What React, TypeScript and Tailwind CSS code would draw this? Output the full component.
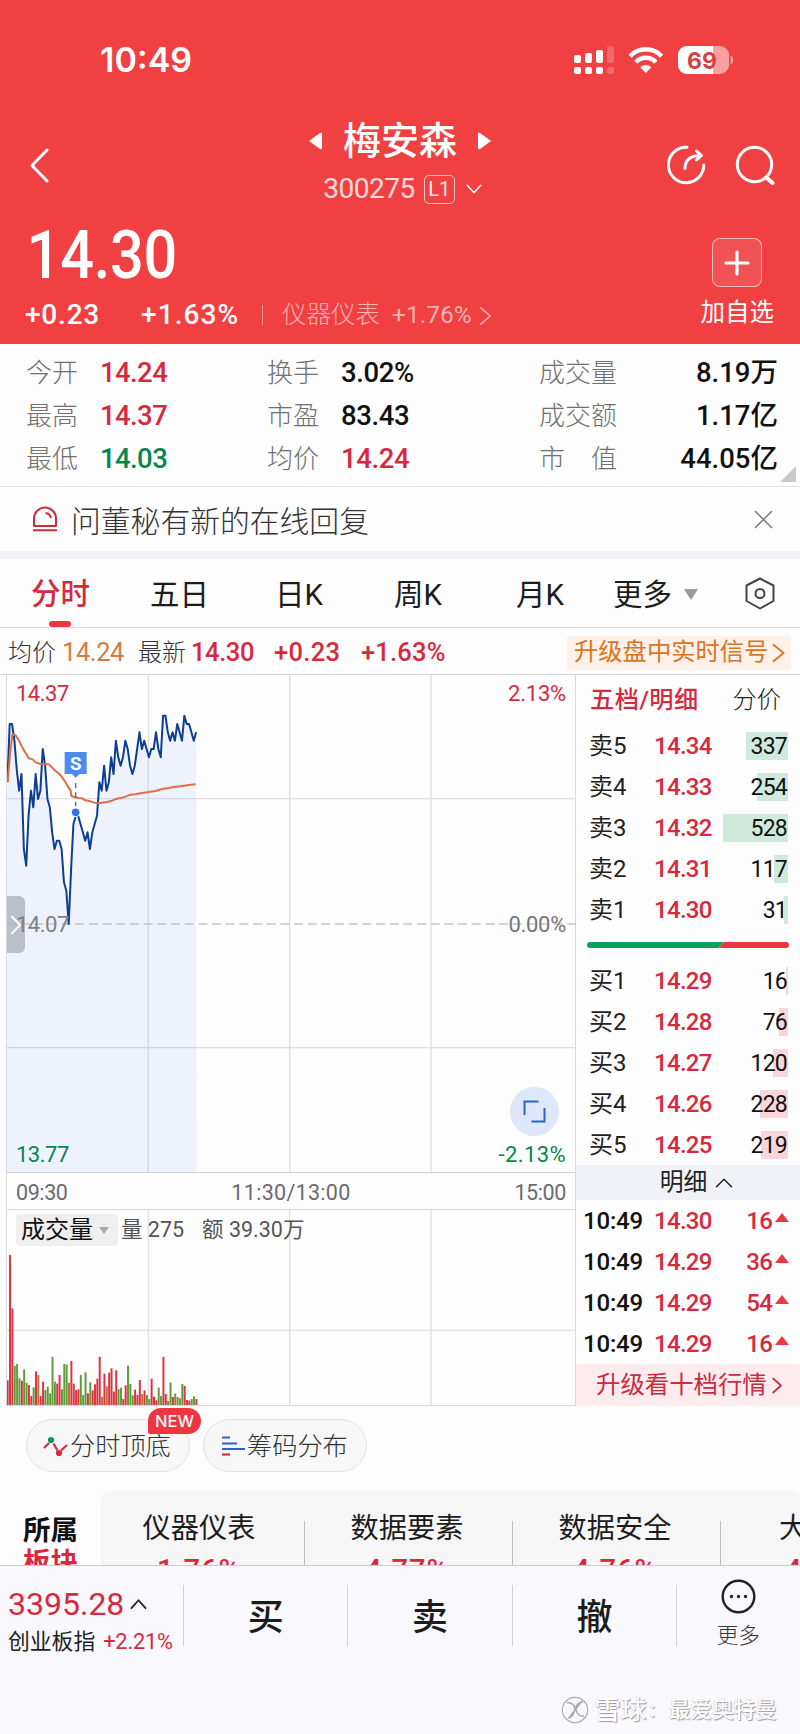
import { Fragment, type ReactNode } from 'react'
import clsx from 'clsx'

const STATS = [
  ['今开', '14.24', 'text-[#d6293e]', '换手', '3.02%', 'text-[#111]', '成交量', '8.19万'],
  ['最高', '14.37', 'text-[#d6293e]', '市盈', '83.43', 'text-[#111]', '成交额', '1.17亿'],
  ['最低', '14.03', 'text-[#07864c]', '均价', '14.24', 'text-[#d6293e]', '市　值', '44.05亿'],
]

const SELLS = [
  { label: '卖5', price: '14.34', qty: 337, bar: 42 },
  { label: '卖4', price: '14.33', qty: 254, bar: 31 },
  { label: '卖3', price: '14.32', qty: 528, bar: 65 },
  { label: '卖2', price: '14.31', qty: 117, bar: 14 },
  { label: '卖1', price: '14.30', qty: 31, bar: 4 },
]

const BUYS = [
  { label: '买1', price: '14.29', qty: 16, bar: 2 },
  { label: '买2', price: '14.28', qty: 76, bar: 9 },
  { label: '买3', price: '14.27', qty: 120, bar: 15 },
  { label: '买4', price: '14.26', qty: 228, bar: 28 },
  { label: '买5', price: '14.25', qty: 219, bar: 27 },
]

const TRADES = [
  ['10:49', '14.30', 16],
  ['10:49', '14.29', 36],
  ['10:49', '14.29', 54],
  ['10:49', '14.29', 16],
]

// price per minute, in cents above the previous close (14.07)
const TICKS = [
  17, 24, 24, 22, 18.5, 16, 18, 9, 7, 13, 16, 14, 18, 15, 16, 21, 19, 15, 14, 11, 9, 10, 10, 9, 5, 4, 0,
  6.5, 12, 13, 13, 12, 11, 10, 11, 9, 11, 12, 13, 17, 16, 19, 16, 17, 20, 18, 22, 20, 19, 20, 22, 21, 19,
  18, 19, 21, 23, 21, 22, 21, 20, 21, 21, 23, 21, 20, 25, 25, 23, 22, 23, 22, 24, 23, 22, 25, 24, 24, 23,
  22, 23,
]

// volume per minute: height + r / g / b (up, down, flat)
const VOLUMES =
  '74r 450r 290r 117g 123g 80g 73r 107g 67g 60r 27r 53g 101r 90b 27r 70r 45g 55g 35g 144g 70g 64r 90r 47g 123g 121g 66b 132r 64r 45r 47r 90g 30g 98g 35r 68g 44r 62r 79r 145r 25b 94r 56b 97r 110r 40r 104r 47g 52g 18r 59r 118g 63g 29g 46r 30r 75r 33b 44r 30g 18g 79r 25r 14r 52g 27g 144r 33r 12g 68g 24r 34g 24b 20g 63g 57r 15r 13r 18g 26g 18r'.split(
    ' ',
  )

const BAR_FILL: Record<string, string> = { r: '#dd3442', g: '#5d9e3b', b: '#b8703c' }

const px = (i: number) => 1 + i * 7.08
const py = (t: number) => 750 - t * 25

function Chevron({ className, d, w = 2 }: { className: string; d: string; w?: number }) {
  return (
    <svg viewBox="0 0 24 24" className={clsx('shrink-0', className)} fill="none" stroke="currentColor" strokeWidth={w} strokeLinecap="round" strokeLinejoin="round">
      <path d={d} />
    </svg>
  )
}

function StatusBar() {
  return (
    <div className="flex h-[118px] items-center pt-[1px] pl-[100px] pr-[65px]">
      <span className="font-[Inter] text-[34px] leading-none font-semibold">10:49</span>
      <svg width="162" height="30" viewBox="0 0 162 30" className="ml-auto" fill="#fff">
        <rect x="1" y="10" width="7" height="8" rx="2" />
        <rect x="12" y="8" width="7" height="10" rx="2" />
        <rect x="23" y="5" width="7" height="13" rx="2" />
        <rect x="34" y="1" width="7" height="17" rx="2" opacity=".22" />
        <rect x="1" y="22" width="7" height="7" rx="2" />
        <rect x="12" y="22" width="7" height="7" rx="2" />
        <rect x="23" y="22" width="7" height="7" rx="2" />
        <rect x="34" y="22" width="7" height="7" rx="2" opacity=".22" />
        <g fill="none" stroke="#fff" strokeWidth="4.4">
          <path d="M57 11.2a21.5 21.5 0 0 1 31.600 0" />
          <path d="M62.800 17.200a13.600 13.600 0 0 1 20 0" />
        </g>
        <path d="M67.300 22.200a8.300 8.300 0 0 1 11 0l-5.500 5.800z" />
        <clipPath id="battery">
          <rect x="105" y="1" width="51" height="28" rx="9" />
        </clipPath>
        <g clipPath="url(#battery)">
          <rect x="105" y="1" width="51" height="28" opacity=".5" />
          <rect x="105" y="1" width="35" height="28" />
        </g>
        <path d="M157.500 10.500a5 5 0 0 1 0 9z" opacity=".5" />
        <text x="129" y="23.500" textAnchor="middle" className="font-[Inter] text-[23px] font-bold" fill="#d63f43">
          69
        </text>
      </svg>
    </div>
  )
}

function Header() {
  return (
    <header className="flex h-[344px] flex-col bg-[#f04042] text-white">
      <StatusBar />
      <div className="flex h-[94px] items-center justify-between pr-[25px] pl-[27px]">
        <svg width="132" height="36" viewBox="0 0 132 36" fill="none" stroke="#fff" strokeWidth="3" strokeLinecap="round" strokeLinejoin="round">
          <path d="M20 3 5 18.500 20 34" />
        </svg>
        <div className="flex flex-col items-center pr-[25px]">
          <div className="flex h-[46px] items-center gap-[21px]">
            <svg width="13" height="18" viewBox="0 0 13 18" fill="#fff">
              <path d="M0 9 11 1q2-1 2 1v14q0 2-2 1z" />
            </svg>
            <span className="text-[38px] leading-[46px] font-medium">梅安森</span>
            <svg width="13" height="18" viewBox="0 0 13 18" fill="#fff">
              <path d="M13 9 2 1Q0 0 0 2v14q0 2 2 1z" />
            </svg>
          </div>
          <div className="flex h-[48px] items-center pt-[2px] pl-[6px]">
            <span className="text-[28px] tracking-[-0.500px] text-white/80">300275</span>
            <span className="ml-[9px] flex h-[29px] w-[31px] items-center justify-center rounded-[5px] border border-white/70 text-[20px] text-white/90">
              L1
            </span>
            <Chevron className="ml-[10px] h-[18px] w-[18px]" d="M3 7l9 10L21 7" />
          </div>
        </div>
        <div className="flex items-center gap-[29px]">
          <svg width="40" height="40" viewBox="0 0 40 40" fill="none" stroke="#fff" strokeWidth="3" strokeLinecap="round" strokeLinejoin="round">
            <path d="M21 2.300A17.700 17.700 0 1 0 37.800 20" />
            <path d="M19 23.500c0-8 4-13 16-13M30.500 6l5 4.500-5 4.500" />
          </svg>
          <svg width="40" height="40" viewBox="0 0 40 40" fill="none" stroke="#fff" strokeWidth="3" strokeLinecap="round">
            <circle cx="19.500" cy="19.500" r="17.200" />
            <path d="m32.500 33.500 5 4.500" strokeWidth="4" />
          </svg>
        </div>
      </div>
      <div className="flex grow justify-between pr-[26px] pl-[25px]">
        <div>
          <div className="mt-[8px] flex h-[72px] origin-left scale-x-[.9] items-center pl-[2px] text-[66px] font-medium tracking-[-0.300px]">14.30</div>
          <div className="mt-[2px] flex h-[42px] items-center text-[28px] font-medium">
            <span className="w-[116px] tracking-[0.800px]">+0.23</span>
            <span className="w-[121px] tracking-[1.100px]">+1.63%</span>
            <span className="h-[20px] w-px bg-white/45" />
            <span className="ml-[19px] text-[24.500px] font-light text-white/60">仪器仪表</span>
            <span className="ml-[12px] text-[24.500px] font-normal text-white/60">+1.76%</span>
            <Chevron className="ml-[2px] h-[23px] w-[23px] text-white/60" d="M7 4l10 8.500L7 21" w={1.600} />
          </div>
        </div>
        <div className="flex flex-col items-center pt-[26px]">
          <div className="flex h-[49px] w-[50px] items-center justify-center rounded-[8px] border border-white/60 bg-white/10">
            <svg width="26" height="26" viewBox="0 0 26 26" stroke="#fff" strokeWidth="3.200" strokeLinecap="round">
              <path d="M13 2v22M2 13h22" />
            </svg>
          </div>
          <span className="mt-[8px] text-[24.500px] leading-[36px]">加自选</span>
        </div>
      </div>
    </header>
  )
}

function Stats() {
  return (
    <section className="relative h-[143px] border-b border-[#e3e3e6] bg-[#fdfdfe] pt-[7px] text-[27.500px] font-medium">
      {STATS.map(([a, av, ac, b, bv, bc, c, cv]) => (
        <div key={a} className="flex h-[43px] items-center pr-[22px] pl-[26px]">
          <span className="w-[74px] text-[26px] font-light text-[#707070]">{a}</span>
          <span className={clsx('w-[167px] pt-[1px] tracking-[-0.600px]', ac)}>{av}</span>
          <span className="w-[74px] text-[26px] font-light text-[#707070]">{b}</span>
          <span className={clsx('w-[198px] pt-[1px] tracking-[-0.400px]', bc)}>{bv}</span>
          <span className="text-[26px] font-light text-[#707070]">{c}</span>
          <span className="ml-auto pt-[1px] text-[#111]">{cv}</span>
        </div>
      ))}
      <svg width="16" height="16" className="absolute right-[4px] bottom-[4px]" fill="#c9c9c9">
        <path d="M16 0v16H0z" />
      </svg>
    </section>
  )
}

function Notice() {
  return (
    <section className="flex h-[64px] items-center bg-[#fdfdfe] pr-[27px] pl-[32px]">
      <svg width="26" height="26" viewBox="0 0 26 26" fill="none" stroke="#cf2b40" strokeWidth="2">
        <path d="M2 20V12.500a11 11 0 0 1 22 0V20z" strokeLinejoin="round" />
        <path d="M1 24.200h24M13.500 7q4.500.5 5.500 5" />
      </svg>
      <span className="ml-[13px] pt-[5px] text-[29.800px] font-light text-[#333]">问董秘有新的在线回复</span>
      <svg width="19" height="19" viewBox="0 0 19 19" className="ml-auto" stroke="#777" strokeWidth="1.500">
        <path d="m1 1 17 17M18 1 1 18" />
      </svg>
    </section>
  )
}

function Tabs() {
  return (
    <nav className="flex h-[69px] items-center border-b border-[#dcdce0] bg-[#fdfdfe] pr-[25px] pl-[31px] text-[29.500px] leading-[36px] text-[#1c1c1c]">
      <div className="flex h-full w-[119px] flex-col font-medium text-[#d6293e]">
        <span className="h-[62px] leading-[71px]">分时</span>
        <span className="ml-[18px] h-[6px] w-[22px] rounded-full bg-[#ea3640]" />
      </div>
      <span className="w-[125px] pt-[3px]">五日</span>
      <span className="w-[119px] pt-[3px]">日K</span>
      <span className="w-[122px] pt-[3px]">周K</span>
      <span className="w-[97px] pt-[3px]">月K</span>
      <span className="pt-[3px]">更多</span>
      <svg width="14" height="11" className="mt-[2px] ml-[12px]" fill="#999">
        <path d="M0 0h14L7 11z" />
      </svg>
      <svg width="30" height="33" viewBox="0 0 30 33" className="ml-auto" fill="none" stroke="#444" strokeWidth="2" strokeLinejoin="round">
        <path d="M15 1.500 28.500 8.500v15.500L15 31.500 1.500 24V8.500z" />
        <circle cx="15" cy="16.500" r="4.500" />
      </svg>
    </nav>
  )
}

function QuoteLine() {
  return (
    <div className="flex h-[46px] items-center pt-[3px] pr-[9px] pl-[8px] text-[25.500px] tracking-[-0.400px] text-[#d6293e]">
      <span className="text-[24px] font-light tracking-normal text-[#333]">均价</span>
      <span className="ml-[6px] w-[76px] text-[#d67a45]">14.24</span>
      <span className="text-[24px] font-light tracking-normal text-[#333]">最新</span>
      <span className="ml-[5px] w-[83px] font-medium">14.30</span>
      <span className="w-[87px] font-medium tracking-[0.300px]">+0.23</span>
      <span className="font-medium tracking-[0.200px]">+1.63%</span>
      <span className="ml-auto flex h-[34px] w-[224px] items-center rounded-[4px] bg-[#fdf1e9] pl-[7px] text-[24.300px] tracking-normal whitespace-nowrap text-[#db7422]">
        升级盘中实时信号
        <Chevron className="h-[22px] w-[22px]" d="M6 3l11 9-11 9" />
      </span>
    </div>
  )
}

function PriceChart() {
  const line = TICKS.map((t, i) => `${px(i)},${py(t)}`).join(' ')
  return (
    <div className="relative h-[497px] text-[22px] leading-[28px]">
      <svg width="569" height="497" viewBox="0 3 1707 1491" className="block" fill="none">
        <path d="M424 0v1494M848 0v1494M1272 0v1494M0 374h1707M0 1121h1707" stroke="#e0e0e2" strokeWidth="4" />
        <polygon points={`${line} 569,1494 0,1494`} fill="#3b6fe8" fillOpacity=".08" />
        <path d="M0 750h1707" stroke="#c4c4c6" strokeWidth="5" strokeDasharray="27 14" />
        <polyline points={line} stroke="#0c3f94" strokeWidth="6" strokeLinejoin="round" />
        <polyline
          points="2,324 9,240 16,182 25,183 34,196 45,218 55,236 66,253 78,257 86,265 100,270 125,271 133,278 143,289 154,297 164,308 175,324 185,341 191,350 193,366 203,369 214,372 225,373 235,379 250,382 262,386 280,387 300,384 315,380 330,374 345,371 358,367 370,362 385,361 405,357 425,354 445,351 465,345 485,342 500,339 520,337 545,333 566,331"
          stroke="#dc6f45"
          strokeWidth="6"
          strokeLinejoin="round"
        />
        <path d="M206 327v70" stroke="#2f6fe8" strokeWidth="4" strokeDasharray="16 12" />
        <circle cx="206" cy="415" r="13" fill="#2f74ec" stroke="#fff" strokeWidth="3" />
        <path d="M173 234h66v66h-22l-11 11-11-11h-22z" fill="#4c8bf0" />
        <text x="206" y="287" textAnchor="middle" className="text-[56px] font-bold" fill="#fff">
          S
        </text>
      </svg>
      <span className="absolute top-[5px] left-[9px] tracking-[-0.500px] text-[#d6293e]">14.37</span>
      <span className="absolute top-[5px] right-[9px] tracking-[-0.200px] text-[#d6293e]">2.13%</span>
      <span className="absolute top-[221px] left-0 flex h-[57px] w-[18px] items-center justify-center rounded-r-[6px] bg-[#a9aeb8]/75 text-white">
        <Chevron className="h-[20px] w-[20px]" d="M7 2l10 10L7 22" w={2.200} />
      </span>
      <span className="absolute top-[236px] left-[9px] tracking-[-0.500px] text-[#808084]">14.07</span>
      <span className="absolute top-[236px] right-[9px] tracking-[-0.300px] text-[#77777b]">0.00%</span>
      <span className="absolute bottom-[3px] left-[9px] tracking-[-0.500px] text-[#07864c]">13.77</span>
      <span className="absolute right-[9px] bottom-[3px] tracking-[0.400px] text-[#07864c]">-2.13%</span>
      <span className="absolute right-[16px] bottom-[36px] flex h-[49px] w-[49px] items-center justify-center rounded-full bg-[#dfe8fa]">
        <svg width="23" height="23" viewBox="0 0 23 23" fill="none" stroke="#2a66c8" strokeWidth="2">
          <path d="M15.500 1.500h-14V15M8.500 21.500h13V8" />
        </svg>
      </span>
    </div>
  )
}

function VolumeChart() {
  return (
    <div className="relative h-[196px] border-t border-[#d9d9dc]">
      <svg width="569" height="195" viewBox="0 0 1707 585" className="block">
        <path d="M424 0v588M848 0v588M1272 0v588M0 361h1707" stroke="#e0e0e2" strokeWidth="4" />
        {VOLUMES.map((v, i) => {
          const h = parseInt(v)
          return <rect key={i} x={i * 7.080 - 1} y={585 - h} width="6" height={h} fill={BAR_FILL[v.slice(-1)]} />
        })}
      </svg>
      <div className="absolute top-[4px] left-[9px] flex h-[32px] items-center text-[21.500px] whitespace-nowrap text-[#555]">
        <span className="flex h-full w-[102px] items-center rounded-[4px] bg-[#efeff0] pl-[5px] text-[24px] text-[#111]">
          成交量
          <svg width="10" height="7" className="ml-[6px]" fill="#aaa">
            <path d="M0 0h10L5 7z" />
          </svg>
        </span>
        <span className="ml-[3px]">量 275</span>
        <span className="ml-[18px]">额 39.30万</span>
      </div>
    </div>
  )
}

function DepthRow({ label, price, qty, bar, tint }: { label: string; price: string; qty: number; bar: number; tint: string }) {
  return (
    <div className="flex h-[41px] items-center pr-[12px] pl-[13px] text-[24px]">
      <span className="w-[65px] pt-[1px] text-[#222]">{label}</span>
      <span className="pt-[1px] font-medium tracking-[-0.700px] text-[#d6293e]">{price}</span>
      <span className="relative ml-auto flex h-[28px] w-[66px] items-center justify-end pt-[1px] pr-[1px] text-[23px]">
        <span className={clsx('absolute inset-y-0 right-0', tint)} style={{ width: bar }} />
        <span className="relative tracking-[-0.800px] text-[#111]">{qty}</span>
      </span>
    </div>
  )
}

function OrderBook() {
  return (
    <aside className="flex w-[224px] flex-col bg-[#fdfdfe]">
      <div className="flex h-[50px] items-center justify-between pr-[19px] pl-[14px] text-[24.200px]">
        <span className="font-medium tracking-[0.500px] text-[#d6293e]">五档/明细</span>
        <span className="font-light text-[#222]">分价</span>
      </div>
      {SELLS.map((r) => (
        <DepthRow key={r.label} {...r} tint="bg-[#cfe9dc]" />
      ))}
      <svg width="202" height="6" viewBox="0 0 202 6" className="mt-[12px] mb-[12px] ml-[11px]">
        <clipPath id="ratio">
          <rect width="202" height="6" rx="3" />
        </clipPath>
        <g clipPath="url(#ratio)">
          <path d="M0 0h137l-6 6H0z" fill="#0aa25a" />
          <path d="M137 0h65v6h-71z" fill="#ec3741" />
        </g>
      </svg>
      {BUYS.map((r) => (
        <DepthRow key={r.label} {...r} tint="bg-[#fad5d9]" />
      ))}
      <div className="flex h-[35px] items-center justify-center gap-[8px] bg-[#f0f2f8] pt-[1px] pl-[17px] text-[23.800px] text-[#222]">
        明细
        <Chevron className="h-[18px] w-[18px]" d="M2 17l10-10 10 10" />
      </div>
      {TRADES.map(([time, price, qty], i) => (
        <div key={i} className="flex h-[41px] items-center pr-[11px] pl-[7px] text-[24px] font-medium text-[#d6293e]">
          <span className="w-[71px] tracking-[-0.200px] text-[#111]">{time}</span>
          <span className="tracking-[-0.700px]">{price}</span>
          <span className="ml-auto tracking-[-0.800px]">{qty}</span>
          <svg width="14" height="9" className="mb-[7px] ml-[3px]" fill="#ec3741">
            <path d="M7 0l7 9H0z" />
          </svg>
        </div>
      ))}
      <div className="flex grow items-center bg-[#fdecee] pt-[1px] pl-[20px] text-[24.400px] whitespace-nowrap text-[#cc2a40]">
        升级看十档行情
        <Chevron className="h-[21px] w-[21px]" d="M7 4l9 8-9 8" />
      </div>
    </aside>
  )
}

function Pill({ icon, children, badge }: { icon: ReactNode; children: ReactNode; badge?: string }) {
  return (
    <div className="relative flex h-[53px] w-[164px] items-center rounded-full border border-[#e2e2e4] bg-[#f7f7f8] pl-[16px] text-[25.200px] font-light text-[#333]">
      {icon}
      <span className="pt-[3px]">{children}</span>
      {badge && (
        <span className="absolute top-[-12px] left-[121px] flex h-[26px] w-[53px] items-center justify-center rounded-[13px] rounded-bl-[2px] bg-[#f03440] font-[Inter] text-[16.500px] font-medium text-white">
          {badge}
        </span>
      )}
    </div>
  )
}

function Sectors() {
  const items = [
    ['仪器仪表', '1.76%'],
    ['数据要素', '4.77%'],
    ['数据安全', '4.76%'],
  ]
  return (
    <section className="flex h-[74px] overflow-hidden">
      <div className="flex w-[101px] shrink-0 flex-col pt-[24px] pl-[23px] text-[27.500px] leading-[32px] font-bold">
        <span className="text-[#111]">所属</span>
        <span className="text-[#d6293e]">板块</span>
      </div>
      <div className="flex h-[120px] grow rounded-t-[8px] bg-[#f6f6f7]">
        {items.map(([name, pct]) => (
          <Fragment key={name}>
            <div className="flex w-[203px] shrink-0 flex-col items-center pt-[18px] pr-[7px]">
              <span className="text-[28.200px] leading-[40px] text-[#1c1c1c]">{name}</span>
              <span className="mt-px text-[29px] leading-[40px] font-medium tracking-[1px] text-[#d6293e]">{pct}</span>
            </div>
            <span className="mt-[30px] mr-[4px] w-px shrink-0 bg-[#bcbcc0]" />
          </Fragment>
        ))}
        <div className="w-[70px] pt-[18px] pl-[54px] whitespace-nowrap">
          <div className="text-[28.200px] leading-[40px] text-[#1c1c1c]">大</div>
          <div className="mt-px ml-[6px] text-[29px] leading-[40px] font-medium text-[#d6293e]">4</div>
        </div>
      </div>
    </section>
  )
}

function TradeBar() {
  return (
    <footer className="relative flex h-[169px] border-t border-[#c8c8cd] bg-[#f8f8fd] pt-[19px]">
      <div className="h-[62px] w-[183px] shrink-0 pl-[8px] text-[#d6293e]">
        <div className="flex h-[38px] items-center text-[32px]">
          3395.28
          <Chevron className="ml-[6px] h-[17px] w-[17px] text-[#222]" d="M2 17l10-11 10 11" w={2.600} />
        </div>
        <div className="flex h-[37px] items-center text-[21.800px] whitespace-nowrap">
          <span className="text-[#222]">创业板指</span>
          <span className="ml-[8px] tracking-[-0.200px]">+2.21%</span>
        </div>
      </div>
      {['买', '卖', '撤'].map((t) => (
        <div key={t} className="flex h-[61px] w-[164.400px] shrink-0 items-center justify-center border-l border-[#cfcfd4] pt-[4px] text-[36px] font-medium text-[#1c1c1c]">
          {t}
        </div>
      ))}
      <div className="h-[61px] w-px bg-[#cfcfd4]" />
      <div className="-mt-[6px] flex w-[122px] flex-col items-center">
        <svg width="35" height="35" viewBox="0 0 35 35" fill="none" stroke="#222" strokeWidth="2.400">
          <circle cx="17.500" cy="17.500" r="15.800" />
          <path d="M10.500 17.500h.01M17.500 17.500h.01M24.500 17.500h.01" strokeWidth="3.400" strokeLinecap="round" />
        </svg>
        <span className="mt-[6px] text-[21.500px] leading-[32px] font-light text-[#333]">更多</span>
      </div>
      <div className="absolute right-[23px] bottom-[9px] flex items-center text-[21.700px] leading-[30px] font-medium text-white [text-shadow:1px_1px_1px_#9a9aa2,-0.5px_-0.5px_0_#c8c8ce]">
        <svg width="28" height="28" viewBox="0 0 28 28" className="mr-[6px]" fill="none">
          <circle cx="14" cy="14" r="12.500" stroke="#a8a8b0" strokeWidth="1.400" />
          <circle cx="14" cy="14" r="11.500" stroke="#fff" strokeWidth="1" />
          <path d="M6 7c5-1 9 3 7.500 8S9 22 7 22M22 6c-5 0-8 4-7 8s4 7 8 6M21 5 8 22" stroke="#a8a8b0" strokeWidth="1.400" />
        </svg>
        <span className="text-[26px]">雪球</span>
        <span className="w-[22px] pl-[3px]">:</span>
        最爱奥特曼
      </div>
    </footer>
  )
}

export default function App() {
  return (
    <div className="h-[1734px] w-[800px] overflow-hidden bg-[#fdfdfe] font-[Roboto,'Noto_Sans_CJK_SC',sans-serif] leading-none">
      <Header />
      <Stats />
      <Notice />
      <div className="h-[8px] bg-[#f1f1f8]" />
      <Tabs />
      <QuoteLine />
      <main className="flex h-[732px] border-t border-[#d4d4d8]">
        <div className="ml-[6px] w-[570px] border-x border-b border-[#d9d9dc]">
          <PriceChart />
          <div className="flex h-[37px] items-center justify-between border-t border-[#d0d0d4] pt-[3px] pr-[9px] pl-[9px] text-[21.500px] tracking-[-0.400px] text-[#6a6a6e]">
            <span>09:30</span>
            <span className="tracking-[0.300px]">11:30/13:00</span>
            <span>15:00</span>
          </div>
          <VolumeChart />
        </div>
        <OrderBook />
      </main>
      <div className="mt-[13px] mb-[19px] flex gap-[13px] pl-[26px]">
        <Pill
          badge="NEW"
          icon={
            <svg width="25" height="20" viewBox="0 0 25 20" className="mr-[2px]" fill="none" stroke="#d6293e" strokeWidth="2.200">
              <path d="M1 12 6 7M10.500 7.500l4 7M18 14.500l6-5.500" />
              <circle cx="8" cy="4" r="2" fill="#0a9a58" stroke="#0a9a58" />
              <circle cx="16" cy="17" r="2" fill="#d6293e" />
            </svg>
          }
        >
          分时顶底
        </Pill>
        <Pill
          icon={
            <svg width="24" height="20" viewBox="0 0 24 20" className="mr-[2px] ml-[1px]" fill="none" strokeWidth="2.200">
              <path d="M1 1.500h8M1 7.500h15M1 13h23" stroke="#2a5fd6" />
              <path d="M1 18.500h8" stroke="#d6293e" />
            </svg>
          }
        >
          筹码分布
        </Pill>
      </div>
      <Sectors />
      <TradeBar />
    </div>
  )
}
